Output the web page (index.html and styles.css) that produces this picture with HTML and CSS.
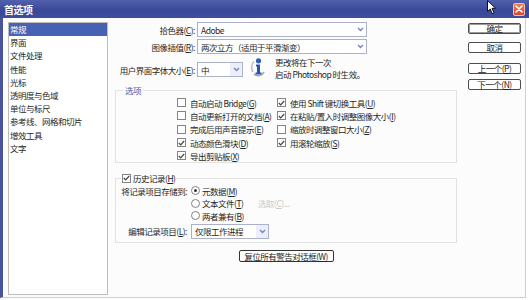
FILE: index.html
```html
<!DOCTYPE html>
<html lang="zh-CN">
<head>
  <meta charset="utf-8">
  <title>首选项</title>
  <link rel="stylesheet" href="styles.css">
</head>
<body>
  <div class="dialog">
    <!-- Window title bar -->
    <div class="titlebar">
      <span class="title">首选项</span>
      <span class="close-btn">
        <svg width="8" height="8" viewBox="0 0 8 8"><path d="M1 1 L7 7 M7 1 L1 7" stroke="#fff" stroke-width="1.6" stroke-linecap="round"/></svg>
      </span>
    </div>

    <div class="window-body">
      <!-- Category list -->
      <ul class="nav-list">
        <li class="active">常规</li>
        <li>界面</li>
        <li>文件处理</li>
        <li>性能</li>
        <li>光标</li>
        <li>透明度与色域</li>
        <li>单位与标尺</li>
        <li>参考线、网格和切片</li>
        <li>增效工具</li>
        <li>文字</li>
      </ul>

      <!-- General settings -->
      <div class="panel">
        <div class="form-grid">
          <span class="field-label">拾色器(<u>C</u>):</span>
          <div class="select wide">
            <span class="value">Adobe</span>
            <span class="arrow"><svg width="7" height="5" viewBox="0 0 7 5"><path d="M1 1 L3.5 3.5 L6 1" fill="none" stroke="#7482c6" stroke-width="1.4"/></svg></span>
          </div>

          <span class="field-label">图像插值(<u>R</u>):</span>
          <div class="select wide">
            <span class="value">两次立方（适用于平滑渐变）</span>
            <span class="arrow"><svg width="7" height="5" viewBox="0 0 7 5"><path d="M1 1 L3.5 3.5 L6 1" fill="none" stroke="#7482c6" stroke-width="1.4"/></svg></span>
          </div>

          <span class="field-label font-label">用户界面字体大小(<u>E</u>):</span>
          <div class="font-row">
            <div class="select small">
              <span class="value">中</span>
              <span class="arrow shaded"><svg width="7" height="5" viewBox="0 0 7 5"><path d="M1 1 L3.5 3.5 L6 1" fill="none" stroke="#7482c6" stroke-width="1.4"/></svg></span>
            </div>
            <svg class="info-icon" width="16" height="22" viewBox="0 0 16 22">
              <path d="M3 15 C1 12 1 7 4 4.5" fill="none" stroke="#b8bcc8" stroke-width="1.5"/>
              <path d="M4 17 C7 20 12 19 14 15" fill="none" stroke="#9aa0b0" stroke-width="1.5"/>
              <circle cx="8.5" cy="3.8" r="2.6" fill="#2f5cc0"/>
              <path d="M6 7.5 H10 V15.5 H11.5 V17.5 H5.5 V15.5 H7 V9.5 H6 Z" fill="#2a54b4"/>
            </svg>
            <div class="note">更改将在下一次<br>启动 Photoshop 时生效。</div>
          </div>
        </div>

        <fieldset class="group options">
          <legend>选项</legend>
          <div class="check-grid">
            <label class="check"><span class="box"></span>自动启动 Bridge(<u>G</u>)</label>
            <label class="check"><span class="box"></span>自动更新打开的文档(<u>A</u>)</label>
            <label class="check"><span class="box"></span>完成后用声音提示(<u>E</u>)</label>
            <label class="check"><span class="box checked"><svg width="7" height="6" viewBox="0 0 7 6"><path d="M0.8 3 L2.7 4.9 L6.2 1" fill="none" stroke="#444" stroke-width="1.2"/></svg></span>动态颜色滑块(<u>D</u>)</label>
            <label class="check"><span class="box checked"><svg width="7" height="6" viewBox="0 0 7 6"><path d="M0.8 3 L2.7 4.9 L6.2 1" fill="none" stroke="#444" stroke-width="1.2"/></svg></span>导出剪贴板(<u>X</u>)</label>
            <label class="check"><span class="box checked"><svg width="7" height="6" viewBox="0 0 7 6"><path d="M0.8 3 L2.7 4.9 L6.2 1" fill="none" stroke="#444" stroke-width="1.2"/></svg></span>使用 Shift 键切换工具(<u>U</u>)</label>
            <label class="check"><span class="box checked"><svg width="7" height="6" viewBox="0 0 7 6"><path d="M0.8 3 L2.7 4.9 L6.2 1" fill="none" stroke="#444" stroke-width="1.2"/></svg></span>在粘贴/置入时调整图像大小(<u>I</u>)</label>
            <label class="check"><span class="box"></span>缩放时调整窗口大小(<u>Z</u>)</label>
            <label class="check"><span class="box checked"><svg width="7" height="6" viewBox="0 0 7 6"><path d="M0.8 3 L2.7 4.9 L6.2 1" fill="none" stroke="#444" stroke-width="1.2"/></svg></span>用滚轮缩放(<u>S</u>)</label>
          </div>
        </fieldset>

        <fieldset class="group history">
          <legend><span class="box checked"><svg width="7" height="6" viewBox="0 0 7 6"><path d="M0.8 3 L2.7 4.9 L6.2 1" fill="none" stroke="#444" stroke-width="1.2"/></svg></span>历史记录(<u>H</u>)</legend>
          <div class="history-grid">
            <span class="field-label">将记录项目存储到:</span>
            <label class="radio"><span class="dot selected"></span>元数据(<u>M</u>)</label>
            <span></span>

            <span></span>
            <label class="radio"><span class="dot"></span>文本文件(<u>T</u>)</label>
            <span class="disabled">选取(<u>C</u>)...</span>

            <span></span>
            <label class="radio"><span class="dot"></span>两者兼有(<u>B</u>)</label>
            <span></span>

            <span class="field-label">编辑记录项目(<u>L</u>):</span>
            <div class="select medium">
              <span class="value">仅限工作进程</span>
              <span class="arrow shaded"><svg width="7" height="5" viewBox="0 0 7 5"><path d="M1 1 L3.5 3.5 L6 1" fill="none" stroke="#7482c6" stroke-width="1.4"/></svg></span>
            </div>
          </div>
        </fieldset>

        <div class="reset-row">
          <button class="btn reset">复位所有警告对话框(<u>W</u>)</button>
        </div>
      </div>

      <!-- Dialog buttons -->
      <div class="actions">
        <button class="btn default">确定</button>
        <button class="btn cancel">取消</button>
        <button class="btn prev">上一个(<u>P</u>)</button>
        <button class="btn next">下一个(<u>N</u>)</button>
      </div>
    </div>

    <svg class="cursor" width="10" height="15" viewBox="0 0 10 15">
      <path d="M0.5 0.5 V11.5 L3.2 9 L5.2 13.6 L7 12.8 L5 8.3 H8.6 Z" fill="#fff" stroke="#111" stroke-width="1"/>
    </svg>
  </div>
</body>
</html>
```

FILE: styles.css
```css
* {
  box-sizing: border-box;
}

body {
  margin: 0;
  background: #fff;
  font-family: "Noto Sans CJK SC", "Liberation Sans", sans-serif;
  font-size: 8.5px;
  letter-spacing: -0.5px;
  color: #262626;
}

u {
  text-underline-offset: 1px;
}

.dialog {
  position: relative;
  width: 529px;
  height: 300px;
  overflow: hidden;
}

/* Title bar */
.titlebar {
  height: 18px;
  display: flex;
  align-items: center;
  padding: 0 4px;
  background: linear-gradient(#5261ad, #3a4899 55%, #3f4d9d);
  color: #fff;
}

.title {
  flex: 1;
  font-size: 10px;
  font-weight: bold;
}

.close-btn {
  width: 12px;
  height: 13px;
  display: flex;
  align-items: center;
  justify-content: center;
  background: linear-gradient(#ec7a4e, #d9482a);
  border: 1px solid #f4c2ac;
  border-radius: 2px;
}

.cursor {
  position: absolute;
  left: 487px;
  top: 0;
}

/* Window body */
.window-body {
  display: flex;
  width: 526px;
  height: 280px;
  padding: 4px 4px 2px 5px;
  background: #fcfcfc;
  border-left: 3px solid #4a539c;
  border-right: 1px solid #d0d0d0;
  border-bottom: 1px solid #d0d0d0;
}

.nav-list {
  list-style: none;
  margin: 0;
  padding: 0;
  width: 100px;
  flex: none;
  background: #fff;
  border: 1px solid #bdbdbd;
}

.nav-list li {
  height: 13.2px;
  line-height: 13.2px;
  padding-left: 1px;
  white-space: nowrap;
}

.nav-list li.active {
  background: #4862b3;
  color: #fff;
}

.panel {
  width: 342px;
  flex: none;
  margin-left: 7px;
  display: flex;
  flex-direction: column;
}

.form-grid {
  display: grid;
  grid-template-columns: 80px auto;
  grid-template-rows: 15px 15px 24px;
  column-gap: 2px;
  row-gap: 2px;
  align-items: center;
}

.field-label {
  justify-self: end;
  text-align: right;
  white-space: nowrap;
}

.font-label {
  align-self: end;
  margin-bottom: 4px;
}

.select {
  height: 15px;
  display: flex;
  align-items: center;
  padding-left: 3px;
  background: #fff;
  border: 1px solid #aab1c8;
  white-space: nowrap;
}

.select .value {
  flex: 1;
  overflow: hidden;
}

.select .arrow {
  width: 12px;
  height: 13px;
  display: flex;
  align-items: center;
  justify-content: center;
}

.select .arrow.shaded {
  background: #eceefa;
}

.select.wide {
  width: 170px;
}

.select.small {
  width: 46px;
}

.select.medium {
  width: 78px;
  grid-column: 2 / 4;
}

.font-row {
  display: flex;
  align-items: flex-end;
  height: 24px;
}

.font-row .select {
  margin-bottom: 3px;
}

.info-icon {
  margin-left: 7px;
  margin-bottom: 1px;
  flex: none;
}

.note {
  margin-left: 9px;
  line-height: 12px;
  white-space: nowrap;
}

/* Group boxes */
.group {
  margin: 0;
  padding: 0;
  min-width: 0;
  border: 1px solid #e2e2e2;
}

.group legend {
  padding: 0 2px;
  line-height: 11px;
}

.options {
  margin-top: 5px;
}

.options legend {
  margin-left: 7px;
  color: #3e5cab;
}

.check-grid {
  display: grid;
  grid-template-columns: 100px auto;
  grid-template-rows: repeat(5, 13.3px);
  grid-auto-flow: column;
  padding-left: 61px;
}

.check,
.radio {
  display: flex;
  align-items: center;
  white-space: nowrap;
}

.box {
  width: 9px;
  height: 9px;
  flex: none;
  margin-right: 4px;
  display: inline-flex;
  align-items: center;
  justify-content: center;
  background: #fff;
  border: 1px solid #848484;
}

.history {
  margin-top: 9px;
}

.history legend {
  display: flex;
  align-items: center;
  margin-left: 5px;
  padding: 0 1px;
  line-height: 12px;
  color: #222;
}

.history legend .box {
  margin-right: 2px;
}

.history-grid {
  display: grid;
  grid-template-columns: 71px 63px auto;
  grid-template-rows: 12.5px 12.5px 12.5px 19px;
  column-gap: 4px;
  align-items: center;
  padding-bottom: 1px;
}

.dot {
  width: 9px;
  height: 9px;
  flex: none;
  margin-right: 2px;
  display: inline-flex;
  align-items: center;
  justify-content: center;
  background: #fff;
  border: 1px solid #858585;
  border-radius: 50%;
}

.dot.selected::after {
  content: "";
  width: 3px;
  height: 3px;
  border-radius: 50%;
  background: #333;
}

.disabled {
  color: #c9c9c9;
  white-space: nowrap;
}

.reset-row {
  display: flex;
  justify-content: center;
  margin-top: 7px;
}

/* Buttons */
.btn {
  height: 11px;
  padding: 0;
  font: inherit;
  letter-spacing: inherit;
  line-height: 9px;
  color: #222;
  background: #fff;
  border: 1px solid #4d4d4d;
  border-radius: 2px;
  white-space: nowrap;
}

.btn.reset {
  width: 95px;
  height: 12px;
  line-height: 10px;
  border-color: #333;
}

.btn.default {
  box-shadow: inset 0 0 0 1px #9a9a9a;
}

.actions {
  width: 53px;
  flex: none;
  margin-left: 11px;
  padding-top: 1px;
  display: flex;
  flex-direction: column;
}

.btn.cancel {
  margin-top: 8px;
}

.btn.prev {
  margin-top: 10px;
}

.btn.next {
  margin-top: 5px;
}
```
